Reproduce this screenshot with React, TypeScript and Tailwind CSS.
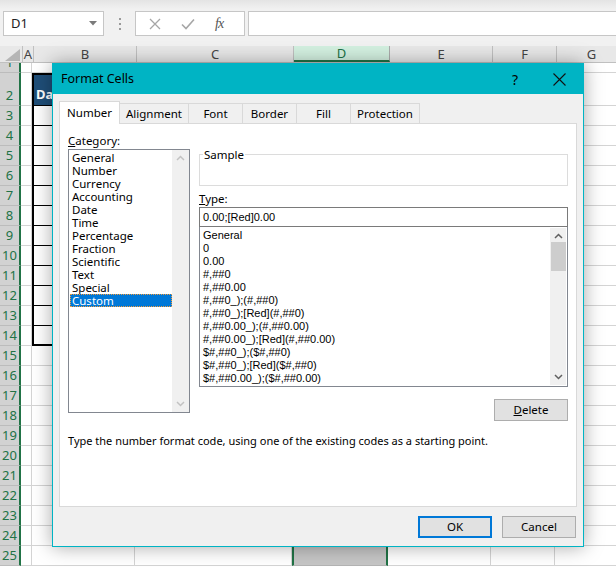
import React from 'react';

const COLS = [
  { name: 'A', w: 'w-[11px]' },
  { name: 'B', w: 'w-[103px]' },
  { name: 'C', w: 'w-[157px]' },
  { name: 'D', w: 'w-[96px]' },
  { name: 'E', w: 'w-[103px]' },
  { name: 'F', w: 'w-[64px]' },
  { name: 'G', w: 'w-[70px]' },
];

const ROWS = Array.from({ length: 25 }, (_, i) => i + 1);

const CATEGORIES = [
  'General', 'Number', 'Currency', 'Accounting', 'Date', 'Time',
  'Percentage', 'Fraction', 'Scientific', 'Text', 'Special', 'Custom',
];

const TYPES = [
  'General',
  '0',
  '0.00',
  '#,##0',
  '#,##0.00',
  '#,##0_);(#,##0)',
  '#,##0_);[Red](#,##0)',
  '#,##0.00_);(#,##0.00)',
  '#,##0.00_);[Red](#,##0.00)',
  '$#,##0_);($#,##0)',
  '$#,##0_);[Red]($#,##0)',
  '$#,##0.00_);($#,##0.00)',
  '$#,##0.00_);[Red]($#,##0.00)',
];

const TABS = [
  { label: 'Number', w: 'w-[61px]' },
  { label: 'Alignment', w: 'w-[70px]' },
  { label: 'Font', w: 'w-[55px]' },
  { label: 'Border', w: 'w-[55px]' },
  { label: 'Fill', w: 'w-[55px]' },
  { label: 'Protection', w: 'w-[70px]' },
];

const Chevron = ({ up, color }: { up?: boolean; color: string }) => (
  <svg width="9" height="6" viewBox="0 0 9 6" className="block">
    <path d={up ? 'M1 5 L4.5 1.5 L8 5' : 'M1 1 L4.5 4.5 L8 1'} fill="none" stroke={color} strokeWidth="1.5" />
  </svg>
);

const rowHeight = (n: number) => (n === 1 ? 'h-[10px]' : n === 2 ? 'h-[33px]' : 'h-[20px]');

const Cell = ({ col, row }: { col: string; row: number }) => {
  if (col === 'D') {
    return <div className="w-[96px] shrink-0 h-full bg-[#c6c6c6] border-x-2 border-x-[#217346] border-b border-b-[#b4b4b4]" />;
  }
  const w = COLS.find(c => c.name === col)!.w;
  if (col === 'B' && row >= 2 && row <= 14) {
    if (row === 2) {
      return (
        <div className={`${w} shrink-0 h-full bg-[#1f4e78] border-l-2 border-t-2 border-b border-black flex items-end pb-[4px] pl-[2px]`}>
          <span className="text-white font-bold text-[13px] leading-none">Da</span>
        </div>
      );
    }
    return (
      <div className={`${w} shrink-0 h-full bg-white border-l-2 border-black ${row === 14 ? 'border-b-2' : 'border-b'}`} />
    );
  }
  return <div className={`${w} shrink-0 h-full bg-white border-r border-b border-[#d4d4d4]`} />;
};

export default function App() {
  return (
    <div className="relative w-[616px] h-[567px] overflow-hidden bg-white font-['Noto_Sans',sans-serif] text-black select-none">
      {/* Formula bar */}
      <div className="h-[46px] bg-[#f0f0f0] bg-gradient-to-b from-[#e4e4e4] to-[#f1f1f1] to-[20%] flex items-center pl-[3px] pt-[1px]">
        <div className="w-[101px] h-[25px] bg-white border border-[#c6c6c6] flex items-center justify-between pl-[7px] pr-[6px]">
          <span className="text-[13px] text-[#222]">D1</span>
          <svg width="8" height="5" viewBox="0 0 8 5"><path d="M0 0 H8 L4 4.5 Z" fill="#7a7a7a" /></svg>
        </div>
        <div className="w-[31px] flex flex-col items-center gap-[3px]">
          <span className="w-[2px] h-[2px] bg-[#9a9a9a]" />
          <span className="w-[2px] h-[2px] bg-[#9a9a9a]" />
          <span className="w-[2px] h-[2px] bg-[#9a9a9a]" />
        </div>
        <div className="w-[110px] h-[25px] bg-white border border-[#c6c6c6] flex items-center pl-[13px]">
          <svg width="12" height="12" viewBox="0 0 12 12"><path d="M1 1 L11 11 M11 1 L1 11" stroke="#a6a6a6" strokeWidth="1.3" /></svg>
          <svg width="14" height="12" viewBox="0 0 14 12" className="ml-[20px]"><path d="M1 6.5 L5 10.5 L13 1.5" fill="none" stroke="#a6a6a6" strokeWidth="1.6" /></svg>
          <span className="ml-[20px] font-['Liberation_Serif',serif] italic text-[14px] text-[#555] tracking-[-1px]">fx</span>
        </div>
        <div className="ml-[3px] flex-1 h-[25px] bg-white border border-[#c6c6c6] border-r-0" />
      </div>

      {/* Column headers */}
      <div className="flex h-[17px] bg-[#e8e8e8] border-b border-[#c0c0c0]">
        <div className="w-[23px] shrink-0 h-full border-r border-[#c0c0c0] flex items-end justify-end pr-[2px] pb-[1px]">
          <svg width="15" height="12" viewBox="0 0 15 12"><path d="M15 0 V12 H0 Z" fill="#b5b5b5" /></svg>
        </div>
        {COLS.map(c => (
          <div
            key={c.name}
            className={`${c.w} shrink-0 h-full flex items-center justify-center text-[13px] leading-none ${
              c.name === 'D'
                ? 'bg-[#d3f0e0] text-[#217346] border-r border-[#ababab] border-b-2 border-b-[#217346]'
                : 'text-[#444] border-r border-[#c0c0c0]'
            }`}
          >
            {c.name}
          </div>
        ))}
      </div>

      {/* Rows */}
      {ROWS.map(n => (
        <div key={n} className={`flex ${rowHeight(n)} overflow-hidden`}>
          <div className="w-[21px] shrink-0 h-full bg-[#d2d2d2] border-r-2 border-r-[#217346] border-b border-b-[#bcbcbc] flex items-end justify-center pb-[1px]">
            <span className="text-[13px] leading-[17px] text-[#217346]">{n}</span>
          </div>
          {COLS.map(c => (
            <Cell key={c.name} col={c.name} row={n} />
          ))}
        </div>
      ))}

      {/* Format Cells dialog */}
      <div className="absolute left-[52px] top-[63px] w-[532px] h-[484px] border border-[#00b4c4] bg-[#f0f0f0] flex flex-col shadow-[0_0_18px_rgba(0,0,0,0.35)]">
        <div className="h-[30px] shrink-0 bg-[#00b4c4] flex items-center pl-[8px]">
          <span className="text-[12.5px] text-black">Format Cells</span>
          <span className="ml-auto text-[14px] text-black mr-[35px]">?</span>
          <svg width="13" height="13" viewBox="0 0 13 13" className="mr-[17px]"><path d="M0.5 0.5 L12.5 12.5 M12.5 0.5 L0.5 12.5" stroke="#111" strokeWidth="1.1" /></svg>
        </div>

        <div className="flex-1 flex flex-col px-[6px] pt-[7px]">
          {/* Tabs */}
          <div className="flex items-end h-[22px]">
            {TABS.map((t, i) => (
              <div
                key={t.label}
                className={`${t.w} shrink-0 flex items-center justify-center text-[11.5px] border border-[#d9d9d9] ${
                  i === 0 ? 'h-[23px] bg-white border-b-0 -mb-[1px] relative z-10' : 'h-[20px] bg-[#f0f0f0] -ml-[1px] border-b-0'
                }`}
              >
                {t.label}
              </div>
            ))}
          </div>

          {/* Panel */}
          <div className="h-[384px] bg-white border border-[#d9d9d9] pt-[8px] px-[8px]">
            <div className="flex gap-[9px]">
              <div className="w-[122px] shrink-0">
                <div className="h-[17px] text-[11.5px] leading-[17px]"><span className="underline">C</span>ategory:</div>
                <div className="h-[264px] border border-[#828790] bg-white flex">
                  <div className="flex-1 pt-[1px] pl-[1px]">
                    {CATEGORIES.map(c => (
                      <div
                        key={c}
                        className={`h-[13px] text-[11.5px] leading-[13px] pl-[2px] ${
                          c === 'Custom' ? 'bg-[#0078d7] text-white outline outline-1 outline-dotted outline-[#f39c3c] -outline-offset-1' : ''
                        }`}
                      >
                        {c}
                      </div>
                    ))}
                  </div>
                  <div className="w-[17px] shrink-0 bg-[#f0f0f0] flex flex-col items-center justify-between py-[5px]">
                    <Chevron up color="#c2c2c2" />
                    <Chevron color="#c2c2c2" />
                  </div>
                </div>
              </div>

              <div className="w-[369px] shrink-0">
                <fieldset className="h-[39px] mt-[15px] border border-[#dcdcdc] px-[3px]">
                  <legend className="text-[11.5px] leading-[15px] px-[1px]">Sample</legend>
                </fieldset>
                <div className="h-[17px] mt-[4px] text-[11.5px] leading-[17px]"><span className="underline">T</span>ype:</div>
                <div className="h-[20px] border border-[#7a7a7a] bg-white flex items-center pl-[3px] font-['Liberation_Sans',sans-serif] text-[11px]">
                  0.00;[Red]0.00
                </div>
                <div className="h-[160px] border border-[#828790] border-t-0 bg-white flex overflow-hidden">
                  <div className="flex-1 pt-[2px] pl-[3px] overflow-hidden font-['Liberation_Sans',sans-serif] text-[11px]">
                    {TYPES.map(t => (
                      <div key={t} className="h-[13px] leading-[13px] whitespace-nowrap">{t}</div>
                    ))}
                  </div>
                  <div className="w-[16px] shrink-0 bg-[#f0f0f0] flex flex-col items-center py-[5px] my-[1px] mr-[1px]">
                    <Chevron up color="#606060" />
                    <div className="w-[15px] h-[29px] bg-[#cdcdcd] mt-[3px]" />
                    <div className="mt-auto">
                      <Chevron color="#606060" />
                    </div>
                  </div>
                </div>
                <div className="flex justify-end mt-[12px]">
                  <button className="w-[74px] h-[22px] bg-[#e1e1e1] border border-[#adadad] text-[11.5px]">
                    <span className="underline">D</span>elete
                  </button>
                </div>
              </div>
            </div>
            <p className="mt-[12px] text-[11px] leading-[16px] whitespace-nowrap">
              Type the number format code, using one of the existing codes as a starting point.
            </p>
          </div>

          {/* Buttons */}
          <div className="flex justify-end gap-[10px] mt-[9px] pr-[1px]">
            <button className="w-[74px] h-[22px] bg-[#e1e1e1] border-2 border-[#0078d7] text-[11.5px]">OK</button>
            <button className="w-[74px] h-[22px] bg-[#e1e1e1] border border-[#adadad] text-[11.5px]">Cancel</button>
          </div>
        </div>
      </div>
    </div>
  );
}
